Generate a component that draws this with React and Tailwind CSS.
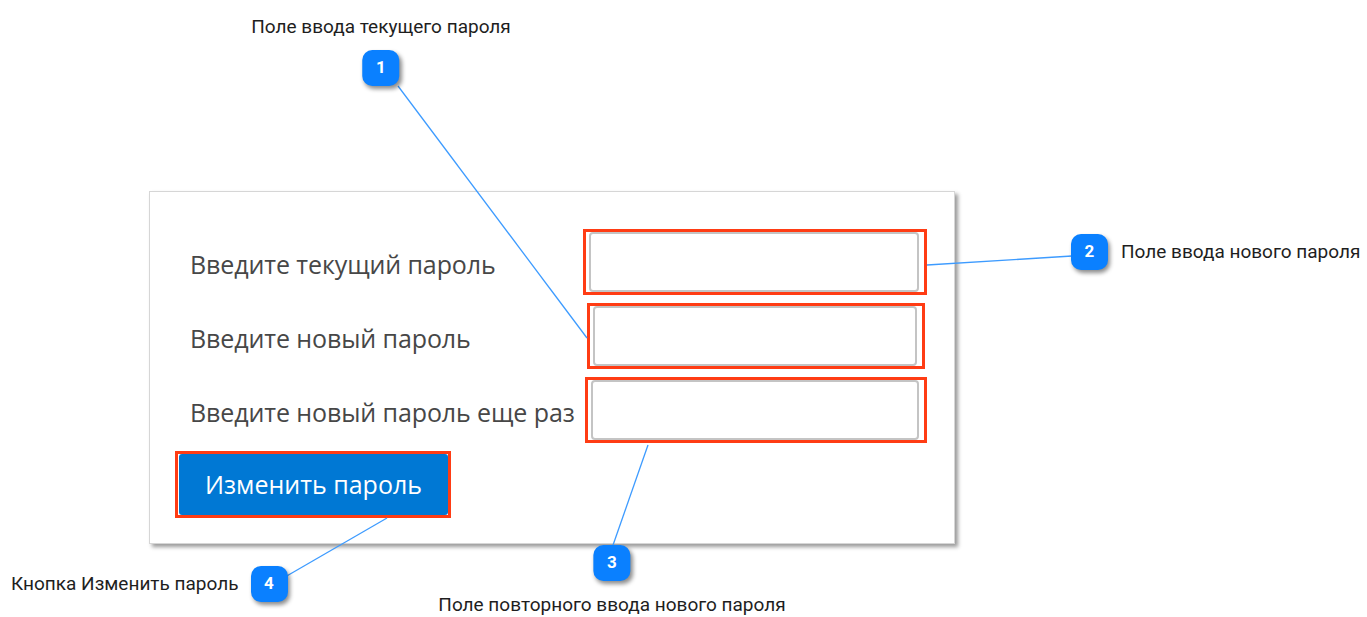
import React from 'react';

const labelFont = { fontFamily: '"Open Sans", "Noto Sans", sans-serif' };
const noteFont = { fontFamily: 'Roboto, "Liberation Sans", sans-serif' };

function Field({ label, boxClass }) {
  return (
    <div className="flex items-center h-[66px]">
      <div className="w-[394px] pt-[6px] text-[25px] tracking-[-0.1px] text-[#474747] whitespace-nowrap" style={labelFont}>
        {label}
      </div>
      <div className={`h-full border-[3px] border-[#ff3c14] pl-[3px] pr-[5px] ${boxClass}`}>
        <div className="h-full w-full rounded-[4px] border-2 border-[#c4c4c4] bg-white" />
      </div>
    </div>
  );
}

function Badge({ n }) {
  return (
    <div
      className="shrink-0 w-[37px] h-[36px] rounded-[10px] bg-[#0a80ff] text-white flex items-center justify-center text-[17px] font-bold shadow-[2px_3px_4px_rgba(0,0,0,0.45)]"
      style={noteFont}
    >
      {n}
    </div>
  );
}

function Note({ children }) {
  return (
    <div className="text-[19px] leading-[22px] text-[#1e1e1e] whitespace-nowrap" style={noteFont}>
      {children}
    </div>
  );
}

export default function App() {
  return (
    <div className="relative w-[1367px] h-[617px] bg-white overflow-hidden">
      <div className="pt-[191px] pl-[149px]">
        <div className="w-[806px] h-[353px] bg-white border border-[#d6d6d6] shadow-[3px_3px_4px_rgba(0,0,0,0.4)] pl-[40px] pt-[37px]">
          <div className="flex flex-col gap-[8px]">
            <Field label="Введите текущий пароль" boxClass="w-[344px] -ml-[1px]" />
            <Field label="Введите новый пароль" boxClass="w-[338px] ml-[3px]" />
            <Field label="Введите новый пароль еще раз" boxClass="w-[342px] ml-[1px]" />
            <div className="-ml-[15px] w-[276px] h-[67px] border-[3px] border-[#ff3c14] pl-[1px]">
              <button
                className="w-[269px] h-full rounded-[3px] bg-[#0078d4] text-white text-[25px]"
                style={labelFont}
              >
                Изменить пароль
              </button>
            </div>
          </div>
        </div>
      </div>

      {/* annotation lines */}
      <svg className="absolute inset-0" width="1367" height="617">
        <g stroke="#3d9bff" strokeWidth="1.3" fill="none">
          <line x1="398" y1="86" x2="587" y2="338" />
          <line x1="1072" y1="256" x2="927" y2="265" />
          <line x1="612" y1="548" x2="648" y2="445" />
          <line x1="285" y1="577" x2="387" y2="518" />
        </g>
      </svg>

      {/* callouts */}
      <div className="absolute left-[381px] top-[16px] -translate-x-1/2 flex flex-col items-center gap-[12px]">
        <Note>Поле ввода текущего пароля</Note>
        <Badge n="1" />
      </div>

      <div className="absolute left-[1071px] top-[234px] flex items-center gap-[13px]">
        <Badge n="2" />
        <Note>Поле ввода нового пароля</Note>
      </div>

      <div className="absolute left-[612px] top-[545px] -translate-x-1/2 flex flex-col items-center gap-[13px]">
        <Badge n="3" />
        <Note>Поле повторного ввода нового пароля</Note>
      </div>

      <div className="absolute left-[11px] top-[566px] flex items-center gap-[12px]">
        <Note>Кнопка Изменить пароль</Note>
        <Badge n="4" />
      </div>
    </div>
  );
}
